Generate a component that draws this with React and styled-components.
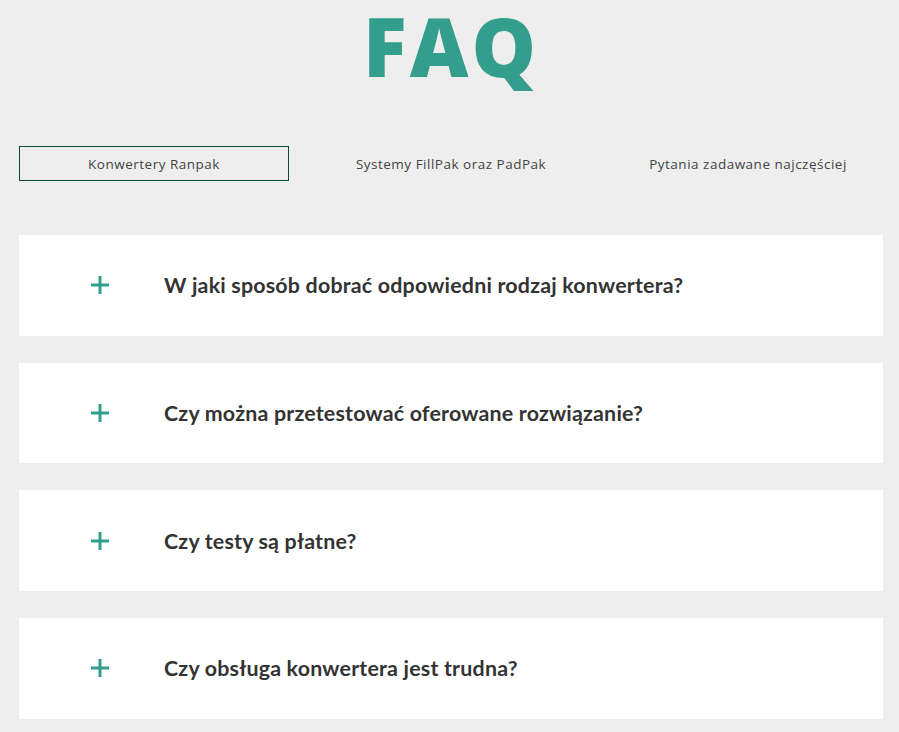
import React from "react";
import styled, { createGlobalStyle } from "styled-components";

const Global = createGlobalStyle`
  html, body { margin: 0; padding: 0; background: #eeeeee; }
  body { font-family: Lato, "Open Sans", sans-serif; }
`;

const Page = styled.div`
  padding: 0 16px 0 19px;
  width: 864px;
`;

const Title = styled.h1`
  margin: 0;
  padding-bottom: 10px;
  text-align: center;
  font-family: "Open Sans", sans-serif;
  font-weight: 800;
  font-size: 81px;
  line-height: 92px;
  letter-spacing: 3px;
  color: #339e8c;
`;

const Tabs = styled.div`
  display: flex;
  justify-content: space-between;
  margin-top: 44px;
`;

const Tab = styled.button`
  width: 270px;
  height: 35px;
  box-sizing: border-box;
  background: transparent;
  border: 1px solid ${(p) => (p.$active ? "#0b4a3c" : "transparent")};
  font-family: "Open Sans", sans-serif;
  font-size: 13.5px;
  letter-spacing: 0.5px;
  color: #444;
  padding: 0;
  cursor: pointer;
`;

const List = styled.div`
  display: flex;
  flex-direction: column;
  gap: 27px;
  margin-top: 54px;
`;

const Card = styled.div`
  background: #fff;
  height: 100.7px;
  display: flex;
  align-items: center;
  padding-left: 72px;
`;

const Plus = styled.svg`
  width: 18px;
  height: 18px;
  flex: none;
`;

const Question = styled.span`
  margin-left: 55px;
  font-family: Lato, sans-serif;
  font-weight: 700;
  font-size: 21.4px;
  color: #333;
  letter-spacing: 0.2px;
`;

const questions = [
  "W jaki sposób dobrać odpowiedni rodzaj konwertera?",
  "Czy można przetestować oferowane rozwiązanie?",
  "Czy testy są płatne?",
  "Czy obsługa konwertera jest trudna?",
];

export default function App() {
  return (
    <>
      <Global />
      <Page>
        <Title>FAQ</Title>
        <Tabs>
          <Tab $active>Konwertery Ranpak</Tab>
          <Tab>Systemy FillPak oraz PadPak</Tab>
          <Tab>Pytania zadawane najczęściej</Tab>
        </Tabs>
        <List>
          {questions.map((q) => (
            <Card key={q}>
              <Plus viewBox="0 0 18 18">
                <rect x="7.5" y="0" width="3" height="18" fill="#339e8c" />
                <rect x="0" y="7.5" width="18" height="3" fill="#339e8c" />
              </Plus>
              <Question>{q}</Question>
            </Card>
          ))}
        </List>
      </Page>
    </>
  );
}
